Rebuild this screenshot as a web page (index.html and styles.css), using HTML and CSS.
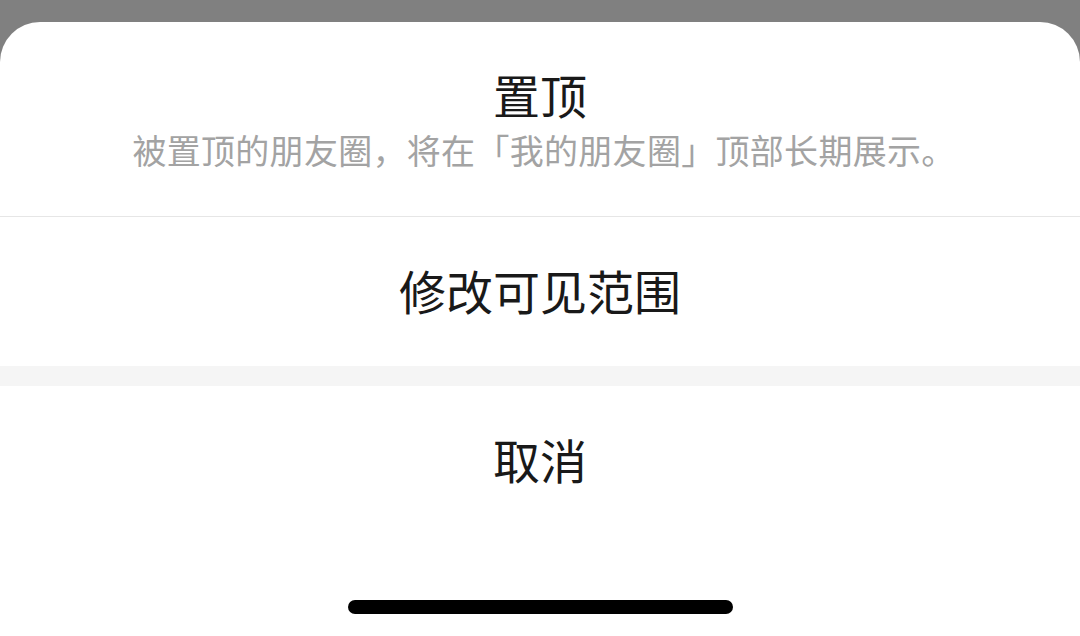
FILE: index.html
```html
<!DOCTYPE html>
<html>
<head>
    <title>朋友圈操作</title>
    <link rel="stylesheet" href="styles.css">
</head>
<body>
    <div class="backdrop"></div>
    <div class="sheet">
        <!-- 置顶 -->
        <div class="item item-top">
            <div class="item-title">置顶</div>
            <div class="item-desc">被置顶的朋友圈，将在「我的朋友圈」顶部长期展示。</div>
        </div>

        <div class="item">
            <div class="item-title">修改可见范围</div>
        </div>

        <div class="gap"></div>

        <div class="item item-cancel">
            <div class="item-title">取消</div>
        </div>

        <div class="safe-area">
            <div class="home-bar"></div>
        </div>
    </div>
</body>
</html>
```

FILE: styles.css
```css
html, body { margin: 0; padding: 0; }
body { background: #808080; font-family: "Noto Sans CJK SC", "Noto Sans", sans-serif; overflow: hidden; }
.backdrop { height: 22px; }
.sheet { background: #fff; border-radius: 40px 40px 0 0; height: 614px; display: flex; flex-direction: column; }
.item { height: 149px; box-sizing: border-box; padding-bottom: 4px; display: flex; flex-direction: column; align-items: center; justify-content: center; }
.item-top { height: 195px; justify-content: flex-start; padding-bottom: 0; border-bottom: 1px solid #e6e6e6; }
.item-title { font-size: 47px; line-height: 56px; color: #191919; }
.item-top .item-title { margin-top: 44px; }
.item-desc { font-size: 34px; line-height: 40px; color: #a3a3a3; margin-top: 8px; padding-left: 8px; letter-spacing: 0.3px; }
.gap { height: 20px; background: #f5f5f5; }
.item-cancel { height: 150px; }
.safe-area { flex: 1; display: flex; justify-content: center; align-items: flex-start; padding-top: 64px; }
.home-bar { width: 385px; height: 14px; border-radius: 7px; background: #000; }
```
